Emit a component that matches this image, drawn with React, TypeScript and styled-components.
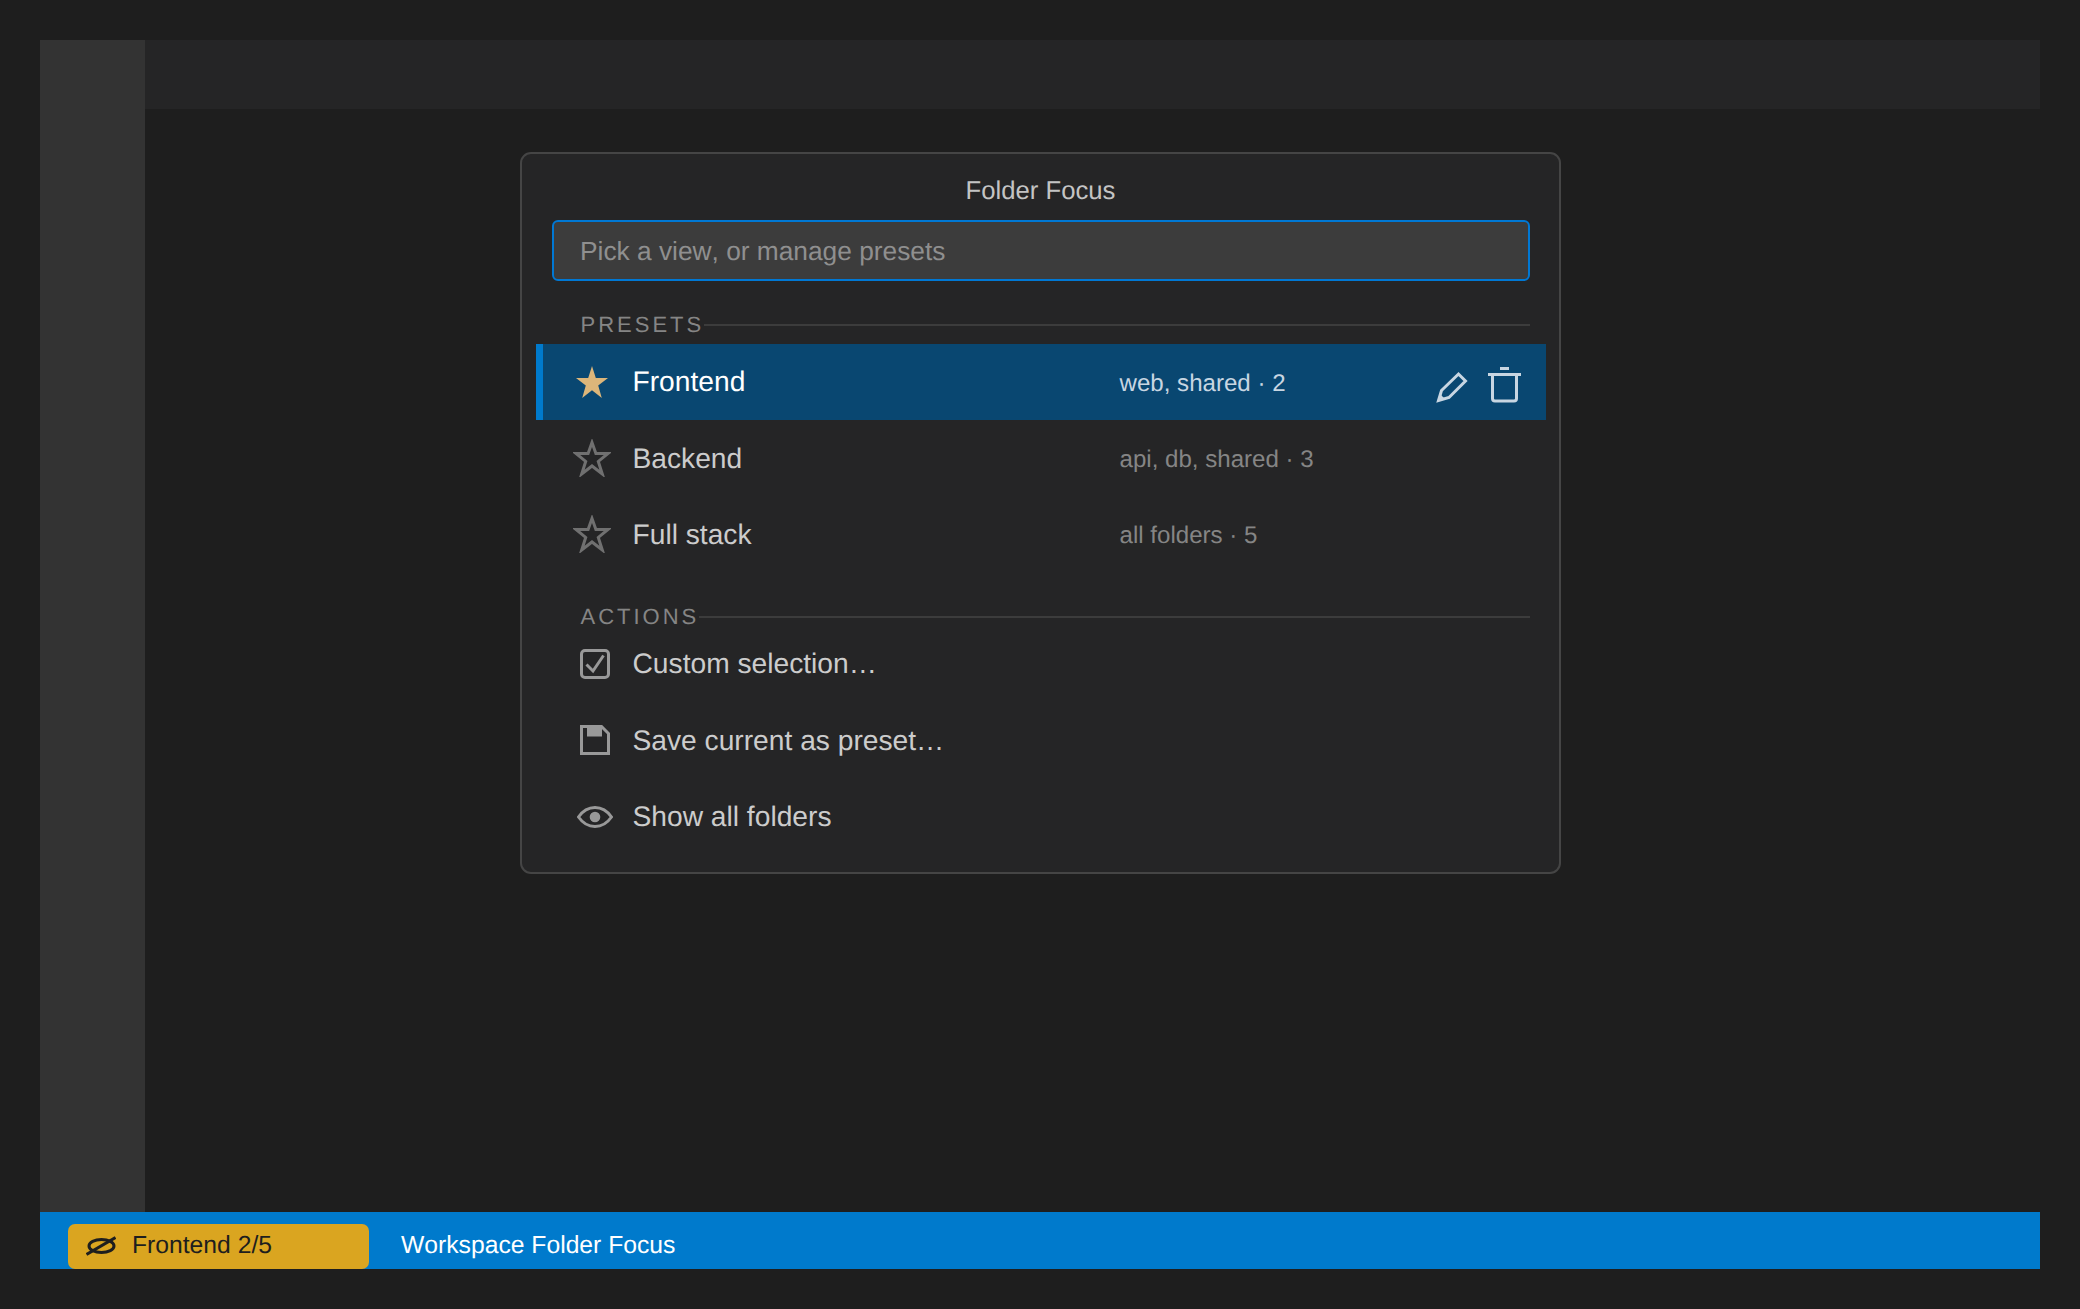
import styled, { createGlobalStyle } from 'styled-components';

const GlobalStyle = createGlobalStyle`
  html, body {
    margin: 0;
    height: 100%;
    background: #1e1e1e;
  }
  body {
    font-family: "Liberation Sans", Arial, sans-serif;
    text-rendering: geometricPrecision;
    font-kerning: none;
  }
`;

const Page = styled.div`
  box-sizing: border-box;
  width: 2080px;
  height: 1309px;
  padding: 40px;
`;

const Frame = styled.div`
  position: relative;
  display: flex;
  flex-direction: column;
  height: 100%;
`;

const Workbench = styled.div`
  flex: 1;
  display: flex;
  min-height: 0;
`;

const Sidebar = styled.div`
  width: 105px;
  background: #333333;
`;

const EditorArea = styled.div`
  flex: 1;
  display: flex;
  flex-direction: column;
`;

const TabBar = styled.div`
  height: 68.5px;
  background: #252526;
`;

const StatusBar = styled.div`
  height: 57.5px;
  display: flex;
  align-items: flex-end;
  background: #007acc;
  padding-left: 28px;
`;

const StatusPill = styled.div`
  box-sizing: border-box;
  width: 301px;
  height: 45.5px;
  display: flex;
  align-items: center;
  gap: 16px;
  padding-left: 18px;
  background: #daa520;
  border-radius: 7px;
  color: #1e1e1e;
  font-size: 24.7px;

  svg {
    flex: none;
  }
`;

const StatusText = styled.div`
  height: 45.5px;
  display: flex;
  align-items: center;
  margin-left: 32px;
  color: #ffffff;
  font-size: 24.7px;
`;

const Panel = styled.div`
  position: absolute;
  top: 112px;
  left: 480px;
  box-sizing: border-box;
  width: 1041px;
  height: 721.5px;
  padding: 0 13.5px;
  background: #252526;
  border: 2.5px solid #454545;
  border-radius: 11px;
`;

const Title = styled.div`
  height: 65.5px;
  display: flex;
  align-items: center;
  justify-content: center;
  padding-top: 9px;
  box-sizing: border-box;
  color: #c4c4c4;
  font-size: 25.7px;
`;

const SearchBox = styled.div`
  box-sizing: border-box;
  height: 61.5px;
  margin: 0 16px;
  padding: 2px 0 0 26.5px;
  display: flex;
  align-items: center;
  background: #3c3c3c;
  border: 2.6px solid #0078d4;
  border-radius: 6px;
  color: #8f8f8f;
  font-size: 26.3px;
`;

const SectionHead = styled.div<{ $top: number; $bottom: number }>`
  display: flex;
  align-items: center;
  height: 20px;
  margin: ${(p) => p.$top}px 16px ${(p) => p.$bottom}px 45px;
  color: #858585;
  font-size: 22px;
  letter-spacing: 3px;

  &::after {
    content: "";
    flex: 1;
    height: 2px;
    background: #3c3c3c;
  }
`;

const Row = styled.div<{ $selected?: boolean; $inset: number }>`
  box-sizing: border-box;
  height: 76.4px;
  display: flex;
  align-items: center;
  padding-left: ${(p) => p.$inset}px;
  padding-right: 25px;
  border-left: 7px solid ${(p) => (p.$selected ? '#007acc' : 'transparent')};
  background: ${(p) => (p.$selected ? '#094771' : 'transparent')};
`;

const IconSlot = styled.div<{ $width: number; $gap: number }>`
  flex: none;
  width: ${(p) => p.$width}px;
  margin-right: ${(p) => p.$gap}px;
  display: flex;
  align-items: center;
  justify-content: center;
  color: #999999;
`;

const Label = styled.div<{ $selected?: boolean }>`
  flex: none;
  width: 487px;
  color: ${(p) => (p.$selected ? '#ffffff' : '#cccccc')};
  font-size: 28.2px;
`;

const Meta = styled.div<{ $selected?: boolean }>`
  white-space: nowrap;
  color: ${(p) => (p.$selected ? '#c8d6e2' : '#858585')};
  font-size: 24.1px;
  padding-top: 4px;
`;

const RowActions = styled.div`
  margin-left: auto;
  display: flex;
  align-items: flex-end;
  gap: 20px;
  color: #c8d6e2;
  padding-top: 6px;
`;

const List = styled.div``;

function StarIcon({ filled }: { filled?: boolean }) {
  if (filled) {
    return (
      <svg width="32" height="32" viewBox="0 0 32 32">
        <polygon
          fill="#dcb67a"
          points="16,0 19.8,11.9 32,11.9 22.2,19.6 25.8,32 16,24.3 6.2,32 9.8,19.6 0,11.9 12.2,11.9"
        />
      </svg>
    );
  }
  return (
    <svg width="38" height="38" viewBox="0 0 38 38">
      <polygon
        fill="none"
        stroke="#707070"
        strokeWidth="3"
        points="19,3.5 22.9,14.5 35,14.5 25.3,22.4 29.3,35 19,27 8.7,35 12.7,22.4 3,14.5 15.1,14.5"
      />
    </svg>
  );
}

function PencilIcon() {
  return (
    <svg width="32" height="32" viewBox="0 0 32 32" fill="none" stroke="currentColor" strokeWidth="3">
      <path d="M2.5 29.5 L5.5 19.5 L22.5 3 L29.5 10 L13 26.5 Z" />
      <path d="M2 30 L4 23 L9 28 Z" fill="currentColor" stroke="none" />
    </svg>
  );
}

function TrashIcon() {
  return (
    <svg width="33" height="36" viewBox="0 0 33 36" fill="none" stroke="currentColor" strokeWidth="3">
      <path d="M12 1.5 H21" />
      <path d="M0 7.5 H33" />
      <path d="M4.5 7.5 V31.5 Q4.5 34 7 34 H26 Q28.5 34 28.5 31.5 V7.5" />
    </svg>
  );
}

function CheckIcon() {
  return (
    <svg width="30" height="30" viewBox="0 0 30 30" fill="none" stroke="currentColor" strokeWidth="3">
      <rect x="1.5" y="1.5" width="27" height="27" rx="3.5" />
      <path d="M6.5 15.5 L13 22 L23.5 6.5" />
    </svg>
  );
}

function SaveIcon() {
  return (
    <svg width="30" height="30" viewBox="0 0 30 30" fill="none" stroke="currentColor" strokeWidth="3">
      <path d="M1.5 1.5 H21.5 L28.5 8.5 V28.5 H1.5 Z" />
      <rect x="7" y="0" width="15" height="11.5" fill="currentColor" stroke="none" />
    </svg>
  );
}

function EyeIcon() {
  return (
    <svg width="36" height="22" viewBox="0 0 36 22" fill="none" stroke="currentColor" strokeWidth="3">
      <path d="M1.5 11 C6 4.5 12 1.5 18 1.5 C24 1.5 30 4.5 34.5 11 C30 17.5 24 20.5 18 20.5 C12 20.5 6 17.5 1.5 11 Z" />
      <circle cx="18" cy="11" r="5.3" fill="currentColor" stroke="none" />
    </svg>
  );
}

function EyeOffIcon() {
  return (
    <svg width="30" height="20" viewBox="0 0 30 20" fill="none" stroke="currentColor" strokeWidth="3">
      <ellipse cx="15.5" cy="10" rx="12.5" ry="6.5" />
      <path d="M0.5 18.5 L29.5 1.5" />
    </svg>
  );
}

export default function App() {
  return (
    <Page>
      <GlobalStyle />
      <Frame>
        <Workbench>
          <Sidebar />
          <EditorArea>
            <TabBar />
          </EditorArea>
        </Workbench>
        <StatusBar>
          <StatusPill>
            <EyeOffIcon />
            Frontend 2/5
          </StatusPill>
          <StatusText>Workspace Folder Focus</StatusText>
        </StatusBar>

        <Panel>
          <Title>Folder Focus</Title>
          <SearchBox>Pick a view, or manage presets</SearchBox>

          <SectionHead $top={33.5} $bottom={9}>PRESETS</SectionHead>
          <List>
            <Row $selected $inset={30.5}>
              <IconSlot $width={38} $gap={21.5}>
                <StarIcon filled />
              </IconSlot>
              <Label $selected>Frontend</Label>
              <Meta $selected>web, shared · 2</Meta>
              <RowActions>
                <PencilIcon />
                <TrashIcon />
              </RowActions>
            </Row>
            <Row $inset={30.5}>
              <IconSlot $width={38} $gap={21.5}>
                <StarIcon />
              </IconSlot>
              <Label>Backend</Label>
              <Meta>api, db, shared · 3</Meta>
            </Row>
            <Row $inset={30.5}>
              <IconSlot $width={38} $gap={21.5}>
                <StarIcon />
              </IconSlot>
              <Label>Full stack</Label>
              <Meta>all folders · 5</Meta>
            </Row>
          </List>

          <SectionHead $top={34} $bottom={-1}>ACTIONS</SectionHead>
          <List>
            <Row $inset={34}>
              <IconSlot $width={36} $gap={20}>
                <CheckIcon />
              </IconSlot>
              <Label>Custom selection…</Label>
            </Row>
            <Row $inset={34}>
              <IconSlot $width={36} $gap={20}>
                <SaveIcon />
              </IconSlot>
              <Label>Save current as preset…</Label>
            </Row>
            <Row $inset={34}>
              <IconSlot $width={36} $gap={20}>
                <EyeIcon />
              </IconSlot>
              <Label>Show all folders</Label>
            </Row>
          </List>
        </Panel>
      </Frame>
    </Page>
  );
}
